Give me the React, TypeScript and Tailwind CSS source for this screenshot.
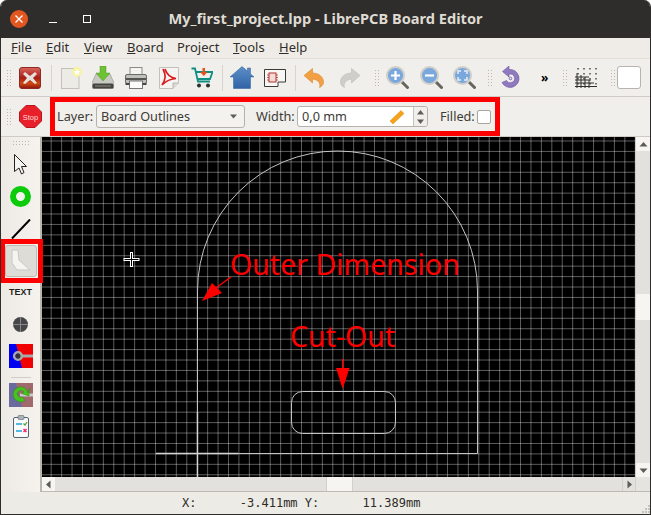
const GRID_STEP = 10.43;
const gridXs = Array.from({ length: 57 }, (_, i) => 51.18 + i * GRID_STEP);
const gridYs = Array.from({ length: 33 }, (_, i) => 141 + i * GRID_STEP);

const Handle = () => (
  <svg width="4" height="16" viewBox="0 0 4 16" className="shrink-0">
    {[0, 3, 6, 9, 12, 15].map((y) => (
      <g key={y} fill="#bdb9b1">
        <rect x="0" y={y} width="1" height="1" />
        <rect x="3" y={y} width="1" height="1" />
      </g>
    ))}
  </svg>
);

const Sep = ({ className }: { className: string }) => <div className={`w-px h-[26px] bg-[#d8d5cf] shrink-0 ${className}`} />;

const CloseIcon = ({ className }: { className: string }) => (
  <svg width="22" height="22" viewBox="0 0 22 22" className={className}>
    <defs>
      <linearGradient id="cl" x1="0" y1="0" x2="0" y2="1">
        <stop offset="0" stopColor="#d9665c" />
        <stop offset="0.5" stopColor="#a81c16" />
        <stop offset="0.75" stopColor="#cf4a12" />
        <stop offset="1" stopColor="#8c130e" />
      </linearGradient>
    </defs>
    <rect x="0.5" y="0.5" width="21" height="21" rx="2.5" fill="url(#cl)" stroke="#8d2a25" />
    <path d="M6 5l5 4 5-4 2 2-4 4 4 5-2 1-5-4-5 4-2-1 4-5-4-4z" fill="#e4e0dc" />
  </svg>
);

const NewIcon = ({ className }: { className: string }) => (
  <svg width="21" height="22" viewBox="0 0 21 22" className={className}>
    <rect x="0.5" y="1.5" width="17.5" height="20" fill="#ecebe6" stroke="#c3c1b9" />
    <circle cx="16" cy="5" r="5" fill="#f7f3a0" />
    <path d="M16 1.5l1 2.5 2.5.3-1.8 1.7.5 2.5-2.2-1.2-2.2 1.2.5-2.5-1.8-1.7 2.5-.3z" fill="#fff" />
  </svg>
);

const SaveIcon = ({ className }: { className: string }) => (
  <svg width="22" height="23" viewBox="0 0 22 23" className={className}>
    <path d="M4 8h14l4 9v4a1.500 1.500 0 0 1-1.500 1.500h-19A1.500 1.500 0 0 1 0 21v-4z" fill="#c9cac4" stroke="#8d8e88" strokeWidth="0.6" />
    <rect x="0.5" y="17.500" width="21" height="5" rx="1.500" fill="#45453f" />
    <rect x="3" y="19.500" width="16" height="1" fill="#8c8c85" />
    <path d="M8 0h6v7h4l-7 8-7-8h4z" fill="#6cc234" stroke="#4f9b1f" strokeWidth="0.5" />
  </svg>
);

const PrintIcon = ({ className }: { className: string }) => (
  <svg width="22" height="22" viewBox="0 0 22 22" className={className}>
    <rect x="5" y="0.5" width="12" height="8" fill="#f4f4f1" stroke="#8b8b86" />
    <rect x="0.5" y="7.500" width="21" height="9" rx="1.500" fill="#bfc0bb" stroke="#6a6a66" />
    <rect x="1" y="11" width="20" height="2" fill="#55554f" />
    <rect x="4.500" y="14" width="13" height="7.500" fill="#fbfbf9" stroke="#777" />
    <rect x="0.5" y="16" width="4" height="2" fill="#47473f" />
    <rect x="17.500" y="16" width="4" height="2" fill="#47473f" />
  </svg>
);

const PdfIcon = ({ className }: { className: string }) => (
  <svg width="20" height="22" viewBox="0 0 20 22" className={className}>
    <path d="M0.5 0.5H19.500V16L14 21.500H0.500z" fill="#f5f4f1" stroke="#c3c1bb" />
    <path d="M14 21.500V16H19.500" fill="#dcdad5" stroke="#b8b6b0" />
    <path d="M4 2 C7 8 7 12 3 18 C7 14 10 12 17 11.500 C12 11 8 8 6 2" fill="none" stroke="#d81e22" strokeWidth="1.700" />
  </svg>
);

const CartIcon = ({ className }: { className: string }) => (
  <svg width="22" height="22" viewBox="0 0 22 22" className={className}>
    <path d="M0.500 1.500h3.500l3 13h12" fill="none" stroke="#0e8f82" strokeWidth="1.800" />
    <path d="M4.500 5h17l-2.500 7H6" fill="none" stroke="#0e8f82" strokeWidth="1.800" />
    <path d="M11.500 1h2.500v4h2.500l-3.700 4-3.800-4h2.500z" fill="#e8501e" />
    <circle cx="8" cy="18.500" r="2" fill="#2b2f2f" />
    <circle cx="17" cy="18.500" r="2" fill="#2b2f2f" />
  </svg>
);

const HomeIcon = ({ className }: { className: string }) => (
  <svg width="24" height="23" viewBox="0 0 24 23" className={className}>
    <defs>
      <linearGradient id="hm" x1="0" y1="0" x2="0" y2="1">
        <stop offset="0" stopColor="#5d8fc9" />
        <stop offset="1" stopColor="#2f63a5" />
      </linearGradient>
    </defs>
    <path d="M12 0.500L17.500 5V2h3v6L24 11h-3.500v11.500h-17V11H0z" fill="url(#hm)" stroke="#2e5e98" strokeWidth="0.5" />
  </svg>
);

const BoardIcon = ({ className }: { className: string }) => (
  <svg width="22" height="18" viewBox="0 0 22 18" className={className}>
    <path d="M0.500 0.500H21.500V13H14V17.500H0.500z" fill="#f8f7f4" stroke="#3a3a36" />
    <rect x="5" y="4" width="7" height="9" fill="#f3dcd8" stroke="#b6312c" />
    <path d="M3 6h2M3 8.500h2M3 11h2M12 6h2M12 8.500h2M12 11h2" stroke="#b6312c" strokeWidth="0.800" />
  </svg>
);

const ArrowBack = ({ color, edge, flip, className }: { color: string; edge: string; flip?: boolean; className: string }) => (
  <svg width="20" height="20" viewBox="0 0 20 20" className={className}>
    <g transform={flip ? "translate(20 0) scale(-1 1)" : undefined}>
      <path d="M0 7.500L8.500 0.500V5C15 5 19.500 9 19.500 14C19.500 16.500 18 18.500 15.500 19.500C16.500 17 16 12 8.500 11V15z" fill={color} stroke={edge} strokeWidth="0.6" />
    </g>
  </svg>
);

const ZoomIcon = ({ kind, className }: { kind: "in" | "out" | "fit"; className: string }) => (
  <svg width="23" height="23" viewBox="0 0 23 23" className={className}>
    <path d="M14 14l7.500 7.500" stroke="#66665f" strokeWidth="3" strokeLinecap="round" />
    <circle cx="9.500" cy="9.500" r="8.500" fill="#7aa7dc" stroke="#cfcfca" strokeWidth="2" />
    {kind === "in" && <path d="M5 9.500h9M9.500 5v9" stroke="#fff" strokeWidth="2.200" />}
    {kind === "out" && <path d="M5 9.500h9" stroke="#fff" strokeWidth="2.200" />}
    {kind === "fit" && <path d="M5 8V5h3M11 5h3v3M14 11v3h-3M8 14H5v-3" fill="none" stroke="#e9eff6" strokeWidth="1.500" />}
  </svg>
);

const RotateIcon = ({ className }: { className: string }) => (
  <svg width="21" height="24" viewBox="0 0 21 24" className={className}>
    <path d="M8 3.500A9 9 0 1 1 1 16.500l4.500-2A4.300 4.300 0 1 0 8 8.300V11L1.500 5.500 8 0z" fill="#8f7ac0" stroke="#6d58a0" strokeWidth="0.6" />
    <circle cx="9.500" cy="12.500" r="1.300" fill="none" stroke="#7b65ad" />
  </svg>
);

const GridIcon = ({ className }: { className: string }) => (
  <svg width="22" height="21" viewBox="0 0 22 21" className={className}>
    {[2, 8, 14, 20].map((x) =>
      [1, 6, 11, 16].map((y) => <rect key={`${x}-${y}`} x={x} y={y} width="2" height="1.500" fill="#77756f" />),
    )}
    <path d="M0 10h14M0 13h16M0 16h19M0 19.500h22M2 6v15M6 8v13M10 10v11M14 13v8" stroke="#2f2f2b" strokeWidth="1" fill="none" />
  </svg>
);

const Cursor = () => (
  <svg width="13" height="21" viewBox="0 0 13 21" className="mt-[9px] shrink-0">
    <path d="M0.500 0.500L12.500 12.500H7.500L10 18.500L7.500 20L5 14L0.500 17.500z" fill="#f5f4f1" stroke="#222" />
  </svg>
);

const TraceTool = () => (
  <svg width="20" height="20" viewBox="0 0 20 20" className="mt-[12px] shrink-0">
    <path d="M1 19.500L19 0.500" stroke="#000" strokeWidth="2" />
  </svg>
);

const OutlineTool = () => (
  <svg width="22" height="24" viewBox="0 0 22 24">
    <path d="M2 1H8L9 11L20 21H7L2 14z" fill="#f6f4f1" stroke="#c9c7c1" />
  </svg>
);

const PlaneIcon = () => (
  <svg width="24" height="24" viewBox="0 0 24 24" className="mt-[12px] shrink-0">
    <rect width="24" height="24" fill="#f00000" />
    <path d="M0 0H7L13 24H0z" fill="#0000f0" />
    <path d="M9 12H24" stroke="#a9a9a9" strokeWidth="3" />
    <circle cx="9" cy="12" r="3.800" fill="none" stroke="#a9a9a9" strokeWidth="2.600" />
    <circle cx="9" cy="12" r="2.500" fill="#333" />
  </svg>
);

const ReconnectIcon = () => (
  <svg width="24" height="24" viewBox="0 0 24 24" className="mt-[5px] shrink-0">
    <rect width="24" height="24" fill="#a06a6c" />
    <path d="M0 0H7L13 24H0z" fill="#6a6a9e" />
    <path d="M11 12H24" stroke="#c9c9c9" strokeWidth="3" />
    <path d="M19 10A7.500 7.500 0 1 0 16 17.500L13.500 14A3.500 3.500 0 1 1 15 9L12.500 10.500L20 13L20.500 5z" fill="#45c21c" stroke="#2f8a12" strokeWidth="0.500" />
  </svg>
);

const ChecklistIcon = () => (
  <svg width="16" height="23" viewBox="0 0 16 23" className="mt-[8px] shrink-0">
    <rect x="0.500" y="2.500" width="15" height="20" rx="1.500" fill="#f9fafa" stroke="#53636f" />
    <rect x="5" y="0.500" width="6" height="4" rx="1" fill="#a9b2b8" stroke="#5b6a75" strokeWidth="0.600" />
    <path d="M3 9h6M3 16h6" stroke="#1fa3d8" strokeWidth="1.300" />
    <path d="M10.500 8.500l1.500 1.500 2-3" fill="none" stroke="#46a32e" strokeWidth="1.200" />
    <path d="M10.500 14l3 3M13.500 14l-3 3" stroke="#ea2d78" strokeWidth="1.500" />
  </svg>
);

const BoardCanvas = () => (
  <div className="relative flex-1 bg-black overflow-hidden">
    <svg width="593" height="340" viewBox="42 137 593 340" className="block">
      <g stroke="#ffffff" strokeOpacity="0.36" strokeWidth="1">
        {gridXs.map((x) => (
          <line key={x} x1={x} x2={x} y1="137" y2="477" />
        ))}
        {gridYs.map((y) => (
          <line key={y} x1="42" x2="635" y1={y} y2={y} />
        ))}
      </g>
      <g fill="none" stroke="#c4c4c4" strokeWidth="1">
        <path d="M197.500 477V291A140 140 0 0 1 477.500 291V453.500H156" />
        <rect x="291.500" y="391.500" width="104" height="42" rx="11" />
      </g>
      <path d="M197.500 412V477M156 453.500H238" stroke="#d4d4d4" strokeWidth="1.400" />
      <path d="M231 277L213 290" stroke="#ff0000" strokeWidth="1.500" />
      <path d="M202 301L212 283L222 293z" fill="#ff0000" />
      <path d="M342.700 359V372" stroke="#ff0000" strokeWidth="1.500" />
      <path d="M342.700 389L336 368H349.500z" fill="#ff0000" />
      <path d="M123.500 259.500H139.500M131.500 252V267" stroke="#ffffff" strokeWidth="3" />
      <path d="M124.500 259.500H138.500M131.500 253V266" stroke="#000000" strokeWidth="1" />
    </svg>
    <span className="absolute left-[188px] top-[107px] text-[28.5px] leading-[40px] text-[#ff0000] font-['Noto_Sans',sans-serif] whitespace-nowrap">
      Outer Dimension
    </span>
    <span className="absolute left-[248px] top-[179px] text-[28.5px] leading-[40px] text-[#ff0000] font-['Noto_Sans',sans-serif] whitespace-nowrap">
      Cut-Out
    </span>
  </div>
);

const Tri = ({ d }: { d: string }) => (
  <svg width="9" height="9" viewBox="0 0 9 9">
    <path d={d} fill="#5d5c58" />
  </svg>
);

export default function App() {
  return (
    <div className="w-[651px] h-[515px] bg-white overflow-hidden">
      <div className="w-full h-full flex flex-col rounded-t-[7px] overflow-hidden border-x border-b border-[#2e2d2b] bg-[#edebe6] text-[#3c3b37] font-['Noto_Sans',sans-serif] text-[13px]">
        {/* title bar */}
        <div className="relative h-[38px] shrink-0 bg-[#2e2d2b] flex items-center">
          <div className="ml-[9px] w-[18px] h-[18px] rounded-full bg-[#e2561f] flex items-center justify-center">
            <svg width="8" height="8" viewBox="0 0 8 8">
              <path d="M0.500 0.500L7.500 7.500M7.500 0.500L0.500 7.500" stroke="#fff" strokeWidth="1.400" />
            </svg>
          </div>
          <div className="ml-[21px] mt-[6px] w-[8px] h-px bg-white" />
          <div className="ml-[26px] w-[8px] h-[8px] border border-white" />
          <div className="absolute inset-x-0 top-0 h-[38px] flex items-center justify-center text-[14.6px] font-bold text-[#dfdbd2]">
            My_first_project.lpp - LibrePCB Board Editor
          </div>
        </div>

        {/* menu */}
        <div className="h-[20px] shrink-0 flex items-center bg-[#efece7] pl-[10px] text-[#2f2e2a]">
          <span className="w-[35px]"><u>F</u>ile</span>
          <span className="w-[38px]"><u>E</u>dit</span>
          <span className="w-[43px]"><u>V</u>iew</span>
          <span className="w-[50px]"><u>B</u>oard</span>
          <span className="w-[56px]">Project</span>
          <span className="w-[46px]"><u>T</u>ools</span>
          <span><u>H</u>elp</span>
        </div>

        {/* main toolbar */}
        <div className="h-[39px] shrink-0 flex items-center pl-[6px] border-t border-[#e3e0da] border-b border-b-[#cfcbc4] bg-[#f1efeb]">
          <Handle />
          <CloseIcon className="ml-[8px] shrink-0" />
          <Sep className="ml-[10px]" />
          <NewIcon className="ml-[9px] shrink-0" />
          <SaveIcon className="ml-[10px] shrink-0" />
          <PrintIcon className="ml-[11px] shrink-0" />
          <PdfIcon className="ml-[12px] shrink-0" />
          <CartIcon className="ml-[12px] shrink-0" />
          <Sep className="ml-[9px]" />
          <HomeIcon className="ml-[7px] shrink-0" />
          <BoardIcon className="ml-[10px] shrink-0" />
          <Sep className="ml-[9px]" />
          <ArrowBack className="ml-[8px] shrink-0" color="#f2a043" edge="#d98a2e" />
          <ArrowBack className="ml-[16px] shrink-0" color="#cfcec9" edge="#bdbcb7" flip />
          <div className="ml-[15px] shrink-0"><Handle /></div>
          <ZoomIcon kind="in" className="ml-[7px] shrink-0" />
          <ZoomIcon kind="out" className="ml-[11px] shrink-0" />
          <ZoomIcon kind="fit" className="ml-[10px] shrink-0" />
          <div className="ml-[12px] shrink-0"><Handle /></div>
          <RotateIcon className="ml-[9px] shrink-0" />
          <span className="ml-[19px] w-[12px] text-[12px] font-bold leading-none text-black">»</span>
          <div className="ml-[10px] shrink-0"><Handle /></div>
          <GridIcon className="ml-[8px] shrink-0" />
          <div className="ml-[14px] shrink-0"><Handle /></div>
          <div className="ml-[2px] w-[24px] h-[23px] shrink-0 rounded-[3px] border border-[#b7b4ad] bg-white" />
        </div>

        {/* tool settings */}
        <div className="h-[39px] shrink-0 flex items-center pl-[6px] bg-[#f1efeb]">
          <Handle />
          <svg width="23" height="23" viewBox="0 0 23 23" className="ml-[8px] shrink-0">
            <path d="M7 0.500H16L22.500 7V16L16 22.500H7L0.500 16V7z" fill="#e8202a" stroke="#b8141b" />
            <text x="11.500" y="14.500" textAnchor="middle" fontSize="7.500" fill="#ffd9d9" fontFamily="'Liberation Sans',sans-serif">Stop</text>
          </svg>
          <div className="ml-[8px] w-[450px] h-[39px] shrink-0 border-[5px] border-[#ff0000] flex items-center pl-[2px] text-[12.7px]">
            <span className="w-[39px] shrink-0">Layer:</span>
            <div className="w-[149px] h-[23px] shrink-0 rounded-[3px] border border-[#b5b2ab] bg-[#f4f2ee] flex items-center pl-[4px] pr-[6px] justify-between">
              <span>Board Outlines</span>
              <Tri d="M1 2.500H8L4.500 6.500z" />
            </div>
            <span className="ml-[11px] w-[41px] shrink-0">Width:</span>
            <div className="w-[131px] h-[21px] shrink-0 rounded-[3px] border border-[#b5b2ab] bg-white flex items-center pl-[4px]">
              <span className="flex-1">0,0 mm</span>
              <svg width="16" height="16" viewBox="0 0 16 16" className="shrink-0 mr-[8px]">
                <path d="M1 12L12 1.500L15 4.500L4 15z" fill="#f5a31a" stroke="#dd8b0c" strokeWidth="0.500" />
              </svg>
              <div className="w-[14px] h-full shrink-0 border-l border-[#c6c3bc] bg-[#f1efeb] rounded-r-[3px] flex flex-col items-center justify-center">
                <Tri d="M1 6.500H8L4.500 2z" />
                <Tri d="M1 2.500H8L4.500 7z" />
              </div>
            </div>
            <span className="ml-[12px] w-[37px] shrink-0">Filled:</span>
            <div className="w-[14px] h-[14px] shrink-0 rounded-[2px] border border-[#a9a69f] bg-white" />
          </div>
        </div>

        {/* workspace */}
        <div className="flex-1 min-h-0 flex border-t border-[#cfcbc4]">
          <div className="w-[39px] shrink-0 flex flex-col items-center bg-gradient-to-r from-[#edeae5] to-[#f6f3ee]">
            <svg width="16" height="4" viewBox="0 0 16 4" className="mt-[4px] shrink-0">
              {[0, 3, 6, 9, 12, 15].map((x) => (
                <g key={x} fill="#bdb9b1">
                  <rect x={x} y="0" width="1" height="1" />
                  <rect x={x} y="3" width="1" height="1" />
                </g>
              ))}
            </svg>
            <Cursor />
            <div className="mt-[11px] w-[21px] h-[21px] shrink-0 rounded-full border-[6px] border-[#0bcb0b] bg-[#f5f3ee]" />
            <TraceTool />
            <div className="relative mt-[6px] w-[32px] h-[32px] shrink-0 rounded-[3px] border border-[#bfbcb5] bg-[#dedcd7] flex items-center justify-center">
              <OutlineTool />
              <div className="absolute -left-[6px] -right-[7px] -top-[7px] -bottom-[7px] border-[5px] border-[#ff0000] z-10" />
            </div>
            <span className="mt-[11px] h-[8px] text-[9px] leading-[8px] font-bold text-[#1e1e1c] font-['Liberation_Sans',sans-serif]">TEXT</span>
            <div className="mt-[21px] w-[15px] h-[15px] shrink-0 rounded-full bg-[#47474a] relative overflow-hidden">
              <div className="absolute left-[7px] top-0 w-px h-full bg-[#85858a]" />
              <div className="absolute left-0 top-[7px] w-full h-px bg-[#85858a]" />
            </div>
            <PlaneIcon />
            <div className="mt-[9px] w-[20px] h-px shrink-0 bg-[#d2cfc9]" />
            <ReconnectIcon />
            <ChecklistIcon />
          </div>
          <div className="w-[2px] shrink-0 bg-[#b9b6b0]" />

          <div className="flex-1 min-w-0 flex flex-col">
            <div className="flex-1 min-h-0 flex">
              <BoardCanvas />
              <div className="w-[15px] shrink-0 flex flex-col items-center bg-[#e2e1dd] border-l border-[#cfcdc7]">
                <div className="w-full h-[14px] shrink-0 bg-[#f6f5f2] flex items-center justify-center">
                  <Tri d="M0.500 6.500H8.500L4.500 2z" />
                </div>
                <div className="flex-1" />
                <div className="w-full h-[26px] shrink-0 bg-[#f6f5f2]" />
                <div className="flex-1" />
                <div className="w-full h-[14px] shrink-0 bg-[#f6f5f2] flex items-center justify-center">
                  <Tri d="M0.500 2.500H8.500L4.500 7z" />
                </div>
              </div>
            </div>
            <div className="h-[15px] shrink-0 flex bg-[#e2e1dd] border-b border-[#bdbab4]">
              <div className="w-[13px] shrink-0 bg-[#f6f5f2] flex items-center justify-center">
                <Tri d="M2 4.500L6.500 0.500V8.500z" />
              </div>
              <div className="flex-1 flex justify-center">
                <div className="ml-[2px] w-[27px] shrink-0 bg-[#f6f5f2] border-x border-[#d2d0ca]" />
              </div>
              <div className="w-[13px] shrink-0 flex items-center justify-center border-l border-[#d2d0ca]">
                <Tri d="M2.500 0.500L7 4.500L2.500 8.500z" />
              </div>
              <div className="w-[15px] shrink-0 bg-[#e6e4df] border-l border-[#d2d0ca]" />
            </div>
          </div>
        </div>

        {/* status */}
        <div className="relative h-[22px] shrink-0 flex items-center pl-[181px] bg-[#edebe6] text-[12px] text-[#2d2c28] font-['DejaVu_Sans_Mono',monospace] whitespace-pre">
          X:      -3.411mm Y:      11.389mm
          <svg width="10" height="10" viewBox="0 0 10 10" className="absolute right-0 bottom-0">
            {[[8, 0], [5, 3], [8, 3], [2, 6], [5, 6], [8, 6]].map(([x, y]) => (
              <rect key={`${x}-${y}`} x={x} y={y + 1} width="2" height="2" fill="#c6c3bc" />
            ))}
          </svg>
        </div>
      </div>
    </div>
  );
}
